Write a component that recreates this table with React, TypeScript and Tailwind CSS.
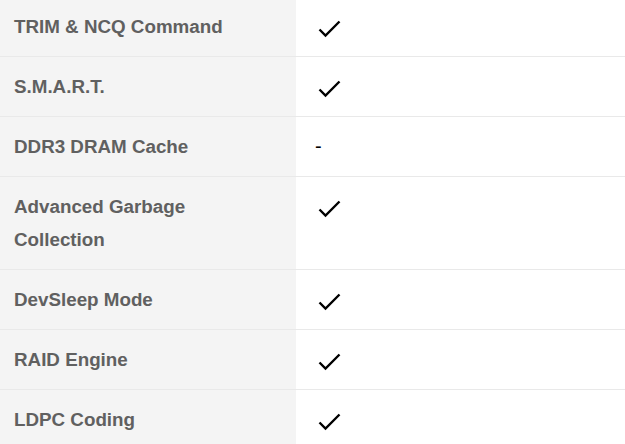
const rows: { label: string; value: "check" | "dash" }[] = [
  { label: "TRIM & NCQ Command", value: "check" },
  { label: "S.M.A.R.T.", value: "check" },
  { label: "DDR3 DRAM Cache", value: "dash" },
  { label: "Advanced Garbage Collection", value: "check" },
  { label: "DevSleep Mode", value: "check" },
  { label: "RAID Engine", value: "check" },
  { label: "LDPC Coding", value: "check" },
]

function Check() {
  return (
    <svg width="24" height="20" viewBox="0 0 24 20" className="block">
      <path d="M1.5 9.5 L7.5 15.5 L21.5 1.5" fill="none" stroke="#000" strokeWidth="2.4" />
    </svg>
  )
}

export default function App() {
  return (
    <div className="w-[625px] h-[444px] overflow-hidden bg-white font-['Liberation_Sans',Arial,sans-serif]">
      <div className="-mt-[3px]">
        {rows.map((row, i) => (
          <div key={i} className="flex border-b border-[#e9e9e9]">
            <div className="w-[296px] shrink-0 bg-[#f4f4f4] py-[13px] pl-[14px] pr-4 text-[18.8px] leading-[33px] font-bold text-[#606060]">
              {row.label === "Advanced Garbage Collection" ? (
                <>
                  Advanced Garbage
                  <br />
                  Collection
                </>
              ) : (
                row.label
              )}
            </div>
            <div className="flex-1 py-[13px] pl-[19px] text-[20px] leading-[33px] text-black">
              {row.value === "check" ? (
                <div className="h-[33px] pl-[3px] pt-[10px]">
                  <Check />
                </div>
              ) : (
                "-"
              )}
            </div>
          </div>
        ))}
      </div>
    </div>
  )
}
